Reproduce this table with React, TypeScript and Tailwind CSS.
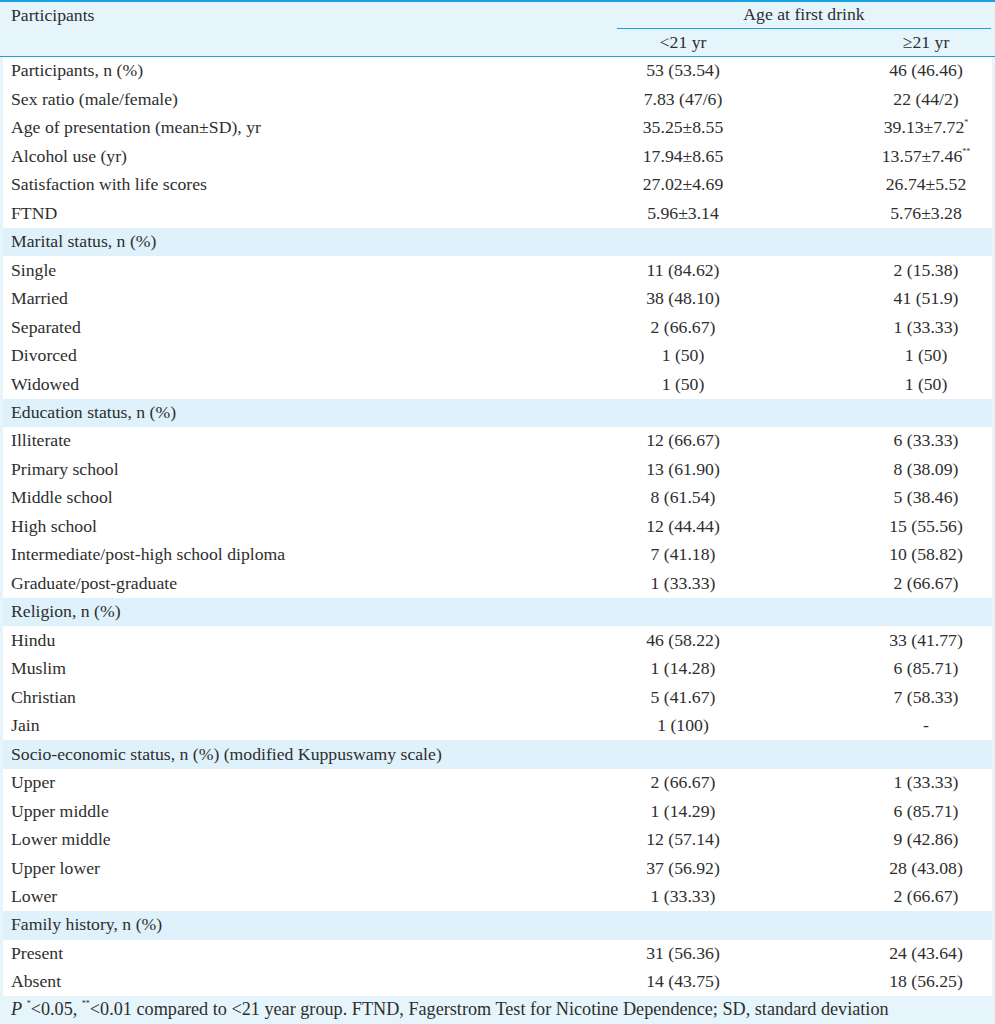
type Row = { label: string; a?: string; b?: string; bSup?: string; section?: boolean }

const rows: Row[] = [
  { label: "Participants, n (%)", a: "53 (53.54)", b: "46 (46.46)" },
  { label: "Sex ratio (male/female)", a: "7.83 (47/6)", b: "22 (44/2)" },
  { label: "Age of presentation (mean±SD), yr", a: "35.25±8.55", b: "39.13±7.72", bSup: "*" },
  { label: "Alcohol use (yr)", a: "17.94±8.65", b: "13.57±7.46", bSup: "**" },
  { label: "Satisfaction with life scores", a: "27.02±4.69", b: "26.74±5.52" },
  { label: "FTND", a: "5.96±3.14", b: "5.76±3.28" },
  { label: "Marital status, n (%)", section: true },
  { label: "Single", a: "11 (84.62)", b: "2 (15.38)" },
  { label: "Married", a: "38 (48.10)", b: "41 (51.9)" },
  { label: "Separated", a: "2 (66.67)", b: "1 (33.33)" },
  { label: "Divorced", a: "1 (50)", b: "1 (50)" },
  { label: "Widowed", a: "1 (50)", b: "1 (50)" },
  { label: "Education status, n (%)", section: true },
  { label: "Illiterate", a: "12 (66.67)", b: "6 (33.33)" },
  { label: "Primary school", a: "13 (61.90)", b: "8 (38.09)" },
  { label: "Middle school", a: "8 (61.54)", b: "5 (38.46)" },
  { label: "High school", a: "12 (44.44)", b: "15 (55.56)" },
  { label: "Intermediate/post-high school diploma", a: "7 (41.18)", b: "10 (58.82)" },
  { label: "Graduate/post-graduate", a: "1 (33.33)", b: "2 (66.67)" },
  { label: "Religion, n (%)", section: true },
  { label: "Hindu", a: "46 (58.22)", b: "33 (41.77)" },
  { label: "Muslim", a: "1 (14.28)", b: "6 (85.71)" },
  { label: "Christian", a: "5 (41.67)", b: "7 (58.33)" },
  { label: "Jain", a: "1 (100)", b: "-" },
  { label: "Socio-economic status, n (%) (modified Kuppuswamy scale)", section: true },
  { label: "Upper", a: "2 (66.67)", b: "1 (33.33)" },
  { label: "Upper middle", a: "1 (14.29)", b: "6 (85.71)" },
  { label: "Lower middle", a: "12 (57.14)", b: "9 (42.86)" },
  { label: "Upper lower", a: "37 (56.92)", b: "28 (43.08)" },
  { label: "Lower", a: "1 (33.33)", b: "2 (66.67)" },
  { label: "Family history, n (%)", section: true },
  { label: "Present", a: "31 (56.36)", b: "24 (43.64)" },
  { label: "Absent", a: "14 (43.75)", b: "18 (56.25)" },
]

const cols = "grid grid-cols-[614px_132px_112px_130px]"

export default function App() {
  return (
    <div className="w-[995px] h-[1024px] bg-[#e6f5fc] text-[#2e2e2e] font-['Liberation_Serif',serif] text-[17.7px] leading-none overflow-hidden">
      <div className="border-t-2 border-[#18a3e3]">
        {/* header */}
        <div className={`${cols} h-[55px] border-b border-[#18a3e3] px-[3px]`}>
          <div className="row-span-2 pl-[8px] pt-[5px]">Participants</div>
          <div className="col-span-3 h-[27px] flex items-center justify-center border-b border-[#18a3e3]">
            Age at first drink
          </div>
          <div className="h-[27px] flex items-center justify-center">&lt;21 yr</div>
          <div />
          <div className="h-[27px] flex items-center justify-center">≥21 yr</div>
        </div>

        {/* body */}
        <div className="mx-[3px] bg-white">
          {rows.map((r) =>
            r.section ? (
              <div key={r.label} className="h-[28.47px] flex items-center pl-[8px] bg-[#dff2fc]">
                {r.label}
              </div>
            ) : (
              <div key={r.label} className={`${cols} h-[28.47px] items-center`}>
                <div className="pl-[8px]">{r.label}</div>
                <div className="text-center">{r.a}</div>
                <div />
                <div className="text-center">
                  {r.b}
                  {r.bSup && <sup className="text-[8px] align-[4px]">{r.bSup}</sup>}
                </div>
              </div>
            )
          )}
        </div>

        {/* footnote */}
        <p className="h-[27px] leading-[27px] pl-[11px] text-[18.2px] whitespace-nowrap">
          <i>P</i> <sup className="text-[8px] align-[5px]">*</sup>&lt;0.05,{" "}
          <sup className="text-[8px] align-[5px]">**</sup>&lt;0.01 compared to &lt;21 year group. FTND, Fagerstrom Test for Nicotine Dependence; SD, standard deviation
        </p>
      </div>
    </div>
  )
}
